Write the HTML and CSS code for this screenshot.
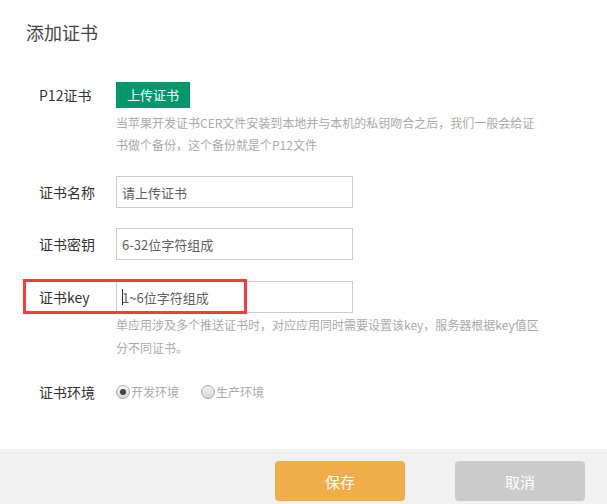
FILE: index.html
```html
<!DOCTYPE html>
<html lang="zh-CN">
<head>
<meta charset="utf-8">
<title>添加证书</title>
<link rel="stylesheet" href="styles.css">
</head>
<body>
<div class="dialog">
  <h2 class="title">添加证书</h2>
  <div class="form">
    <div class="row row-p12">
      <label class="label">P12证书</label>
      <div class="field">
        <button class="btn-upload" type="button">上传证书</button>
        <p class="hint hint-p12">当苹果开发证书CER文件安装到本地并与本机的私钥吻合之后，我们一般会给证书做个备份，这个备份就是个P12文件</p>
      </div>
    </div>
    <div class="row row-input">
      <label class="label">证书名称</label>
      <div class="field">
        <input class="input" type="text" value="请上传证书">
      </div>
    </div>
    <div class="row row-input">
      <label class="label">证书密钥</label>
      <div class="field">
        <input class="input" type="text" value="6-32位字符组成">
      </div>
    </div>
    <div class="row row-key">
      <span class="highlight"></span>
      <label class="label">证书key</label>
      <div class="field">
        <div class="input-wrap">
          <input class="input" type="text" value="1~6位字符组成">
          <span class="caret"></span>
        </div>
        <p class="hint hint-key">单应用涉及多个推送证书时，对应应用同时需要设置该key，服务器根据key值区分不同证书。</p>
      </div>
    </div>
    <div class="row row-env">
      <label class="label">证书环境</label>
      <div class="field radios">
        <span class="radio checked"><span class="dot"></span>开发环境</span>
        <span class="radio"><span class="dot"></span>生产环境</span>
      </div>
    </div>
  </div>
  <div class="footer">
    <button class="btn btn-save" type="button">保存</button>
    <button class="btn btn-cancel" type="button">取消</button>
  </div>
</div>
</body>
</html>
```
FILE: styles.css
```css
* { box-sizing: border-box; }
html, body {
  margin: 0;
  padding: 0;
  background: #fff;
  font-family: "Noto Sans CJK SC", "Noto Sans", sans-serif;
}
.dialog {
  width: 607px;
  height: 504px;
  display: flex;
  flex-direction: column;
  overflow: hidden;
}
.title {
  margin: 0;
  padding: 20px 0 0 26px;
  height: 82px;
  font-size: 18px;
  line-height: 24px;
  font-weight: normal;
  color: #444;
}
.form {
  flex: 1;
  padding-left: 39px;
}
.row {
  display: flex;
  position: relative;
}
.label {
  width: 77px;
  flex: none;
  font-size: 14px;
  color: #333;
}
.field {
  flex: none;
  width: 425px;
}
.row-p12 .label { line-height: 26px; }
.btn-upload {
  display: block;
  width: 74px;
  height: 26px;
  border: 0;
  border-radius: 0;
  padding: 0;
  background: #00986a;
  color: #fff;
  font-family: inherit;
  font-size: 13px;
  line-height: 26px;
}
.hint {
  margin: 0;
  font-size: 12px;
  color: #aaa;
}
.hint-p12 {
  margin-top: 4px;
  line-height: 22px;
}
.row-input { margin-top: 20px; }
.row-input .label, .row-key .label { line-height: 32px; }
.row-input + .row-input { margin-top: 20px; }
.row-key { margin-top: 21px; }
.input {
  display: block;
  width: 237px;
  height: 32px;
  border: 1px solid #ccc;
  padding: 0 5px;
  font-family: inherit;
  font-size: 13px;
  color: #5f5f5f;
  background: #fff;
  outline: none;
}
.input-wrap { position: relative; width: 237px; }
.caret {
  position: absolute;
  left: 6px;
  top: 8px;
  width: 1px;
  height: 16px;
  background: #333;
}
.hint-key {
  line-height: 23px;
}
.highlight {
  position: absolute;
  z-index: 2;
  left: -16px;
  top: -2px;
  width: 224px;
  height: 35px;
  border: 3px solid #fd3a3a;
  pointer-events: none;
}
.row-env {
  margin-top: 23px;
  line-height: 20px;
}
.row-env .label { line-height: 20px; }
.radios {
  display: flex;
  gap: 22px;
  font-size: 12px;
  color: #aaa;
}
.radio {
  display: inline-flex;
  align-items: center;
}
.radio .dot {
  width: 14px;
  height: 14px;
  border-radius: 50%;
  border: 1px solid #a9a9a9;
  background: linear-gradient(#f4f4f4, #d6d6d6);
  position: relative;
  margin-right: 1px;
}
.radio.checked .dot::after {
  content: "";
  position: absolute;
  left: 3px;
  top: 3px;
  width: 6px;
  height: 6px;
  border-radius: 50%;
  background: #444;
}
.footer {
  height: 55px;
  flex: none;
  background: #f1f1f1;
  display: flex;
  justify-content: flex-end;
  align-items: flex-start;
  gap: 50px;
  padding: 12px 22px 0 0;
}
.btn {
  width: 130px;
  height: 40px;
  border: 0;
  border-radius: 4px;
  color: #fff;
  font-family: inherit;
  font-size: 15px;
  padding: 0;
}
.btn-save { background: #f0ad48; }
.btn-cancel { background: #cbcbcb; }
```
